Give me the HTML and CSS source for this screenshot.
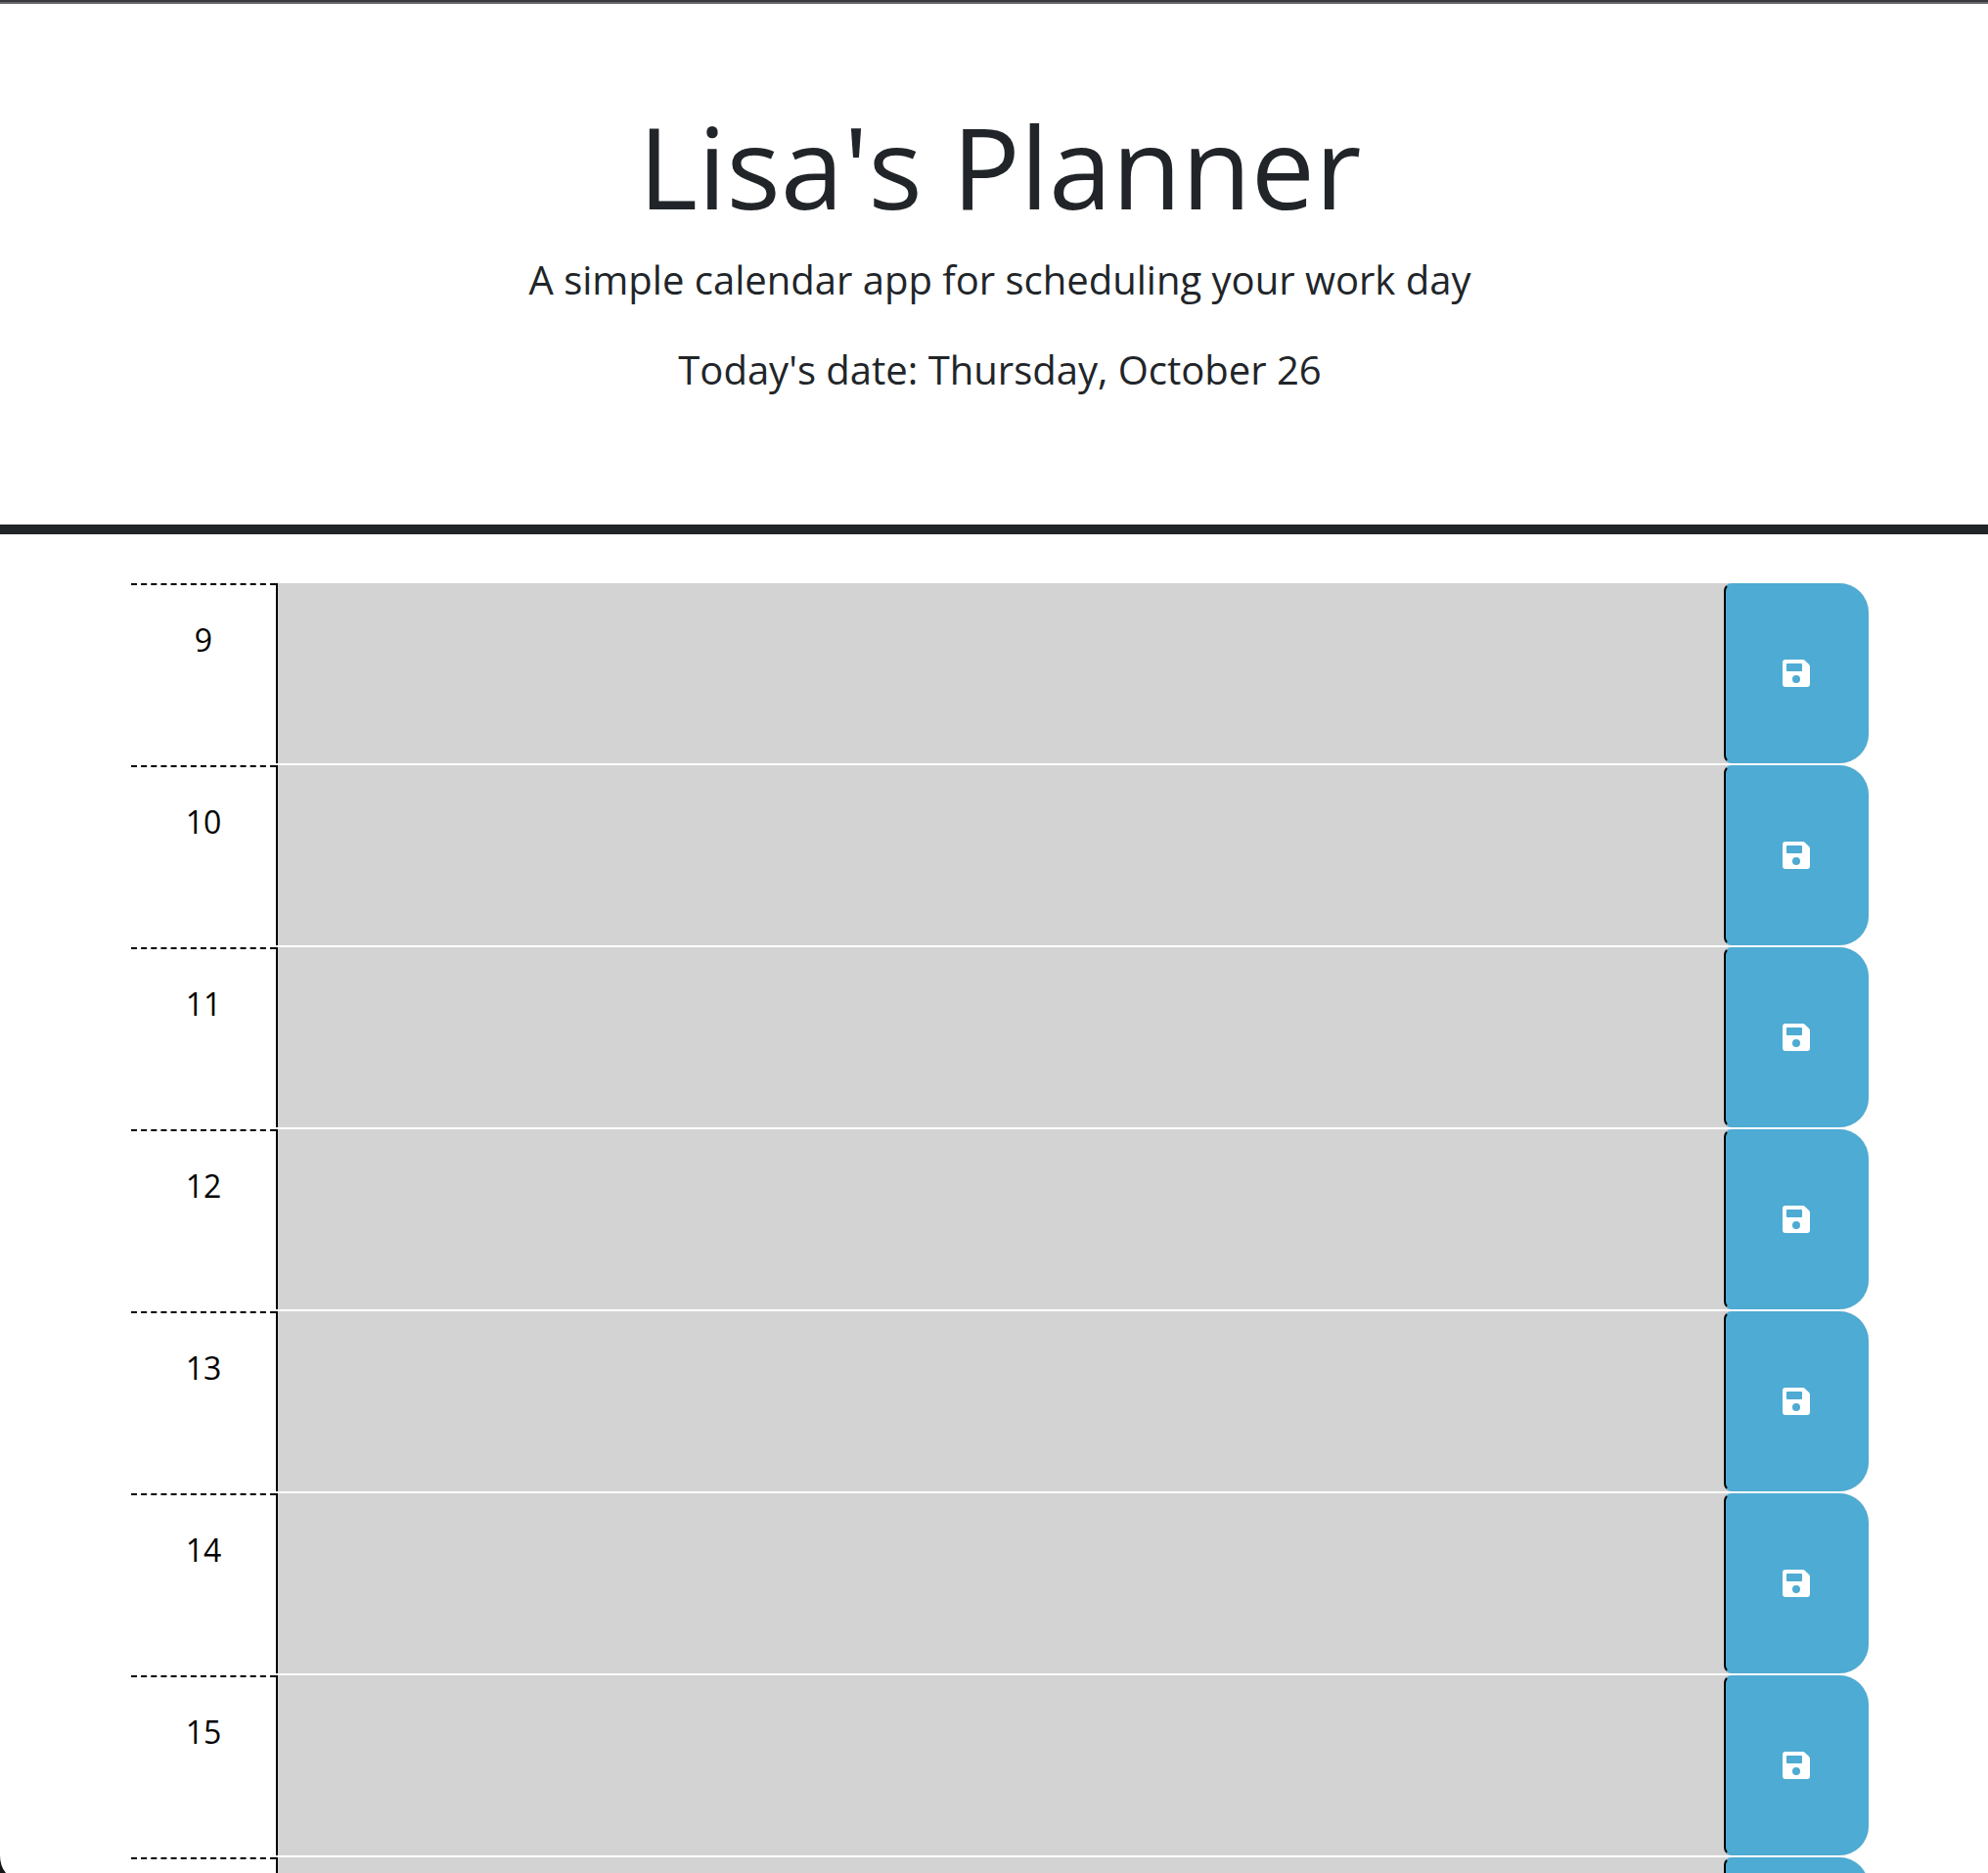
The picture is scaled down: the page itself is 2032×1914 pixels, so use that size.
FILE: index.html
```html
<!DOCTYPE html>
<html lang="en">
<head>
  <meta charset="utf-8">
  <title>Lisa's Planner</title>
  <link rel="stylesheet" href="styles.css">
</head>
<body>
  <svg class="sprite" aria-hidden="true">
    <symbol id="save" viewBox="0 0 28 28">
      <path fill-rule="evenodd" d="M3 0H20.8Q22 0 22.900 .9L27.100 5.100Q28 6 28 7.200V25Q28 28 25 28H3Q0 28 0 25V3Q0 0 3 0ZM4.800 4Q4 4 4 4.800V11.200Q4 12 4.800 12H19.200Q20 12 20 11.200V4.800Q20 4 19.200 4ZM14 16A4 4 0 1 0 14 24A4 4 0 1 0 14 16Z"/>
    </symbol>
  </svg>

  <header class="header">
    <h1 class="title">Lisa's Planner</h1>
    <p class="lead">A simple calendar app for scheduling your work day</p>
    <p class="lead">Today's date: Thursday, October 26</p>
  </header>

  <main class="planner">
    <div class="time-block">
      <label class="hour" for="hour-9">9</label>
      <textarea class="description" id="hour-9"></textarea>
      <button class="save" type="button" aria-label="save"><svg class="icon"><use href="#save"/></svg></button>
    </div>
    <div class="time-block">
      <label class="hour" for="hour-10">10</label>
      <textarea class="description" id="hour-10"></textarea>
      <button class="save" type="button" aria-label="save"><svg class="icon"><use href="#save"/></svg></button>
    </div>
    <div class="time-block">
      <label class="hour" for="hour-11">11</label>
      <textarea class="description" id="hour-11"></textarea>
      <button class="save" type="button" aria-label="save"><svg class="icon"><use href="#save"/></svg></button>
    </div>
    <div class="time-block">
      <label class="hour" for="hour-12">12</label>
      <textarea class="description" id="hour-12"></textarea>
      <button class="save" type="button" aria-label="save"><svg class="icon"><use href="#save"/></svg></button>
    </div>
    <div class="time-block">
      <label class="hour" for="hour-13">13</label>
      <textarea class="description" id="hour-13"></textarea>
      <button class="save" type="button" aria-label="save"><svg class="icon"><use href="#save"/></svg></button>
    </div>
    <div class="time-block">
      <label class="hour" for="hour-14">14</label>
      <textarea class="description" id="hour-14"></textarea>
      <button class="save" type="button" aria-label="save"><svg class="icon"><use href="#save"/></svg></button>
    </div>
    <div class="time-block">
      <label class="hour" for="hour-15">15</label>
      <textarea class="description" id="hour-15"></textarea>
      <button class="save" type="button" aria-label="save"><svg class="icon"><use href="#save"/></svg></button>
    </div>
    <div class="time-block">
      <div class="hour"></div>
      <textarea class="description" id="hour-16" aria-label="16"></textarea>
      <button class="save" type="button" aria-label="save"><svg class="icon"><use href="#save"/></svg></button>
    </div>
  </main>

  <svg class="window-corner" viewBox="0 0 6 18" aria-hidden="true"><path d="M0 0Q0 11 6 18H0Z"/></svg>
</body>
</html>
```
FILE: styles.css
```css
* {
  box-sizing: border-box;
}

html,
body {
  height: 100%;
}

body {
  margin: 0;
  overflow: hidden;
  background: #fff;
  color: #212529;
  font-family: "Open Sans", "Noto Sans", sans-serif;
  font-size: 32px;
  line-height: 48px;
}

.sprite {
  display: none;
}

.header {
  padding: 98px 0 96px 12px;
  border-top: 2px solid #39383f;
  border-bottom: 10px solid #212529;
  box-shadow: inset 0 2px 0 #68686c;
  text-align: center;
}

.title {
  margin: 0 0 18px;
  font-size: 116px;
  font-weight: 400;
  line-height: 138px;
}

.lead {
  margin: 0 0 32px;
  font-size: 40px;
  line-height: 60px;
}

.planner {
  display: flex;
  flex-direction: column;
  gap: 2px;
  padding: 50px 122px 0 134px;
}

.time-block {
  display: grid;
  grid-template-columns: 1fr 10fr 1fr;
  height: 184px;
  flex-shrink: 0;
  border-radius: 0 30px 30px 0;
  background: #d3d3d3;
}

.hour {
  padding-top: 32px;
  border-top: 2px dashed #000;
  background: #fff;
  color: #000;
  text-align: center;
}

.description {
  width: 100%;
  height: 100%;
  margin: 0;
  padding: 4px;
  border: 0;
  border-left: 2px solid #000;
  outline: 0;
  background: transparent;
  color: #000;
  font: inherit;
  resize: none;
}

.save {
  display: flex;
  align-items: center;
  justify-content: center;
  padding: 0;
  border: 2px solid #4eabd3;
  border-left-color: #000;
  border-radius: 8px 30px 30px 8px;
  background: #4eabd3;
  color: #fff;
  cursor: pointer;
}

.icon {
  width: 28px;
  height: 28px;
  fill: currentColor;
}

.window-corner {
  position: fixed;
  bottom: 0;
  left: 0;
  width: 6px;
  height: 18px;
  fill: #161616;
}
```
